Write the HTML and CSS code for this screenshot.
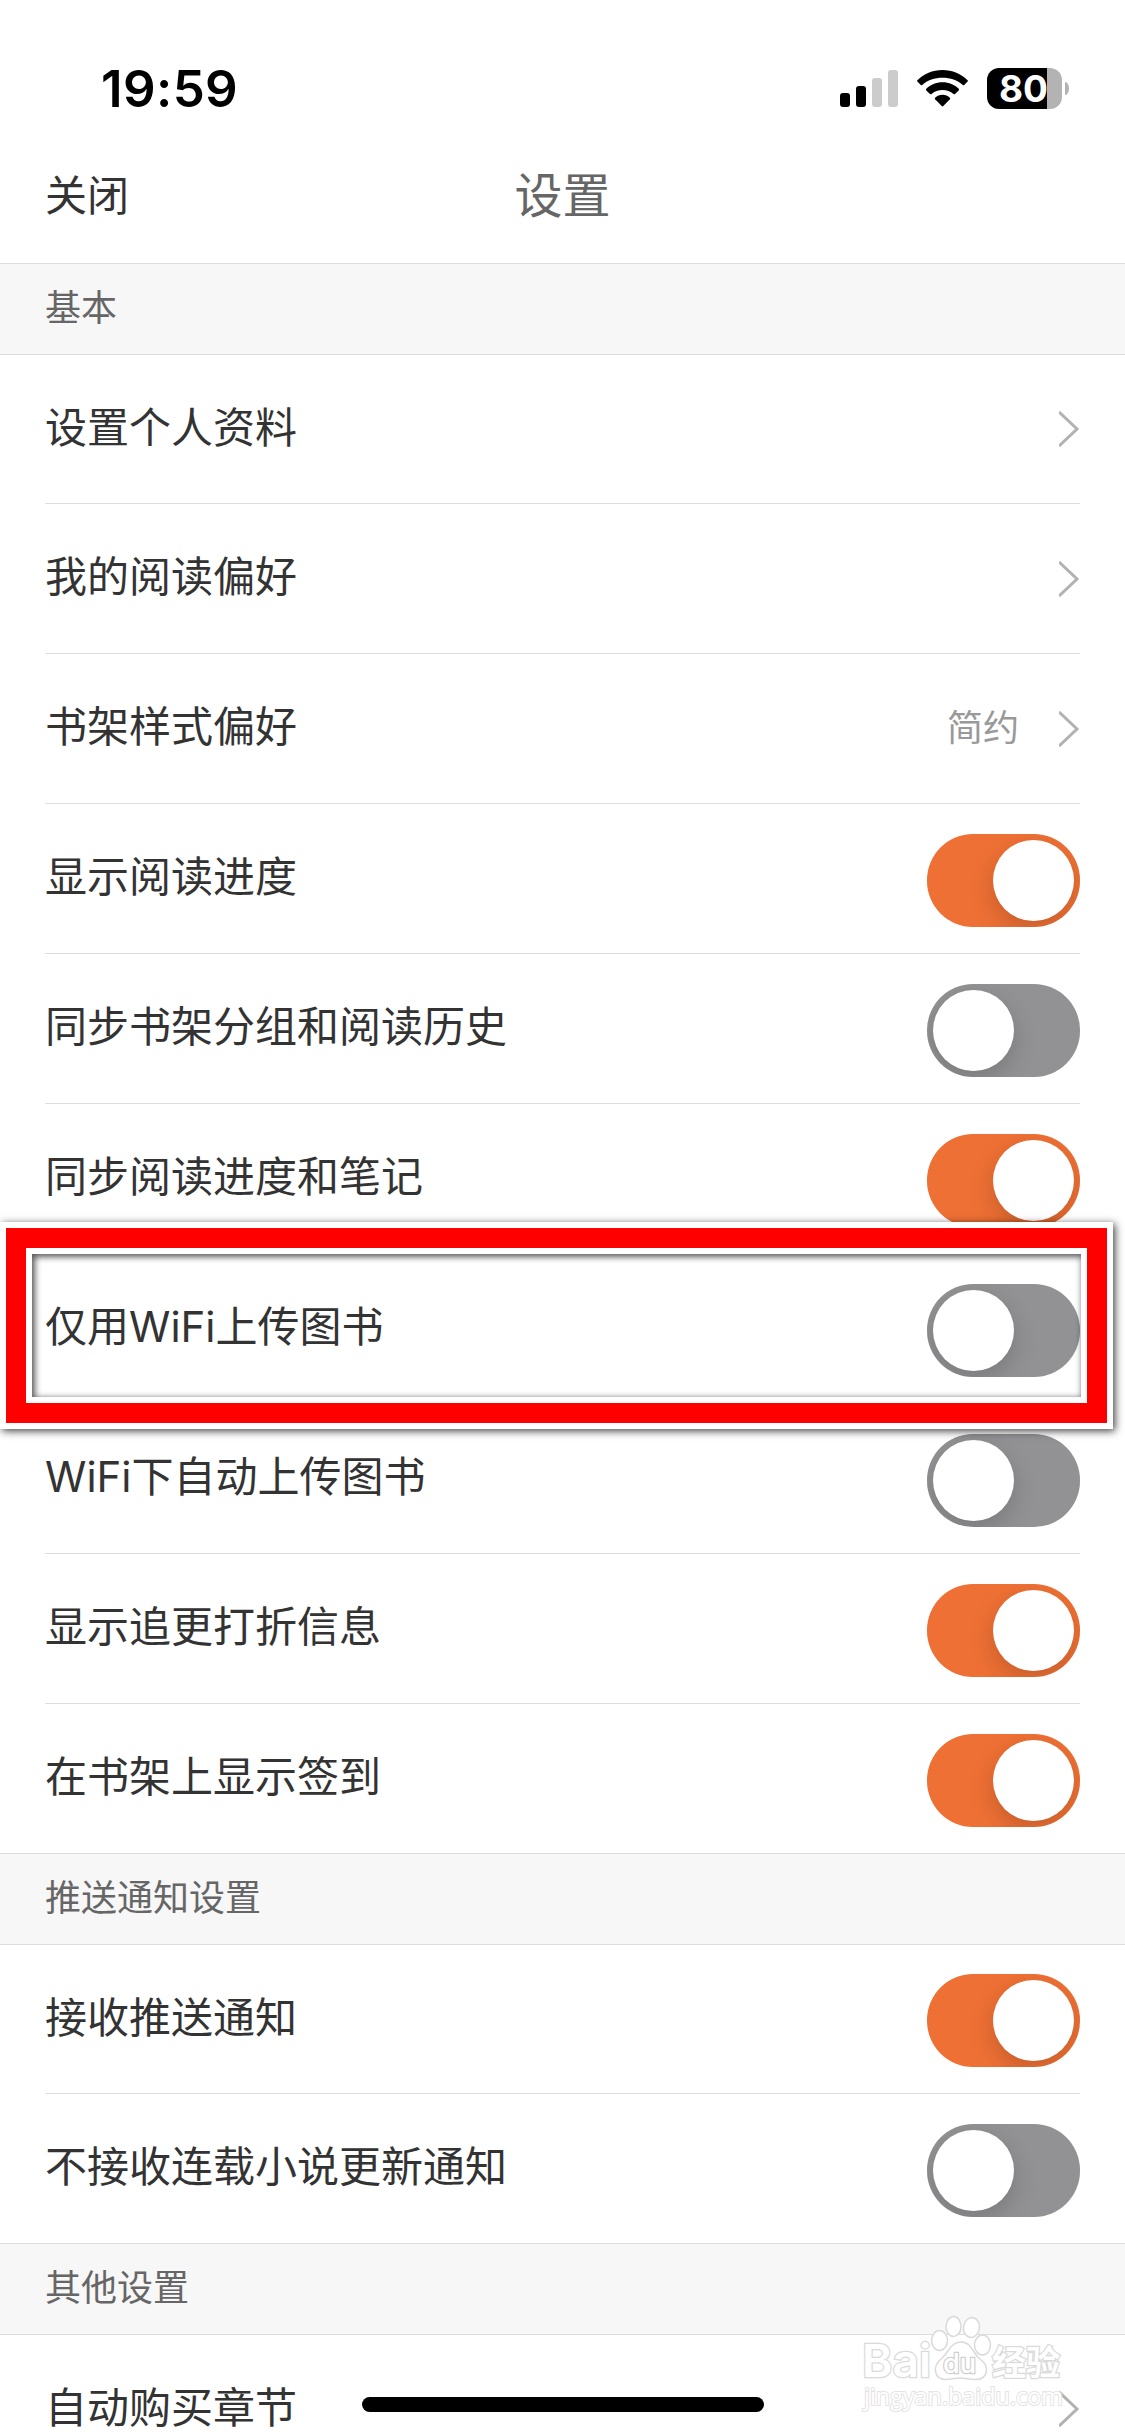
FILE: index.html
```html
<!DOCTYPE html>
<html lang="zh-CN">
<head>
    <meta charset="UTF-8">
    <meta name="viewport" content="width=device-width, initial-scale=1.0">
    <title>设置</title>
    <link rel="stylesheet" href="styles.css">
</head>
<body>
    <div class="status-bar">
        <div class="time">19:59</div>
        <div class="status-icons">
            <svg class="signal" width="58" height="37" viewBox="0 0 58 37">
                <rect x="0" y="23" width="10" height="14" rx="3"/>
                <rect x="16" y="16" width="10" height="21" rx="3"/>
                <rect class="weak" x="32" y="8" width="10" height="29" rx="3"/>
                <rect class="weak" x="48" y="0" width="10" height="37" rx="3"/>
            </svg>
            <svg class="wifi" width="51" height="37" viewBox="0 0 51 37">
                <path d="M25.5 0C35.4 0 44.3 3.9 50.6 10.2Q51.2 10.9 50.6 11.6L47.2 15Q46.5 15.6 45.8 15C40.4 10 33.3 7.7 25.5 7.7S10.6 10 5.2 15Q4.5 15.6 3.8 15L0.4 11.6Q-0.2 10.9 0.4 10.2C6.7 3.9 15.6 0 25.5 0Z"/>
                <path d="M25.5 12.3C31.9 12.3 37.6 14.8 41.7 18.8Q42.5 19.6 41.7 20.4L38 24Q37.3 24.7 36.5 24C33.5 21.4 29.7 20 25.5 20S17.5 21.4 14.5 24Q13.7 24.7 13 24L9.3 20.4Q8.5 19.6 9.3 18.8C13.4 14.8 19.1 12.3 25.5 12.3Z"/>
                <path d="M25.5 24.8C28.4 24.8 31 25.9 32.9 27.7Q33.6 28.4 32.9 29.2L26.3 36Q25.5 36.8 24.7 36L18.1 29.2Q17.4 28.4 18.1 27.7C20 25.9 22.6 24.8 25.5 24.8Z"/>
            </svg>
            <div class="battery">
                <div class="battery-body">80</div>
                <div class="battery-tip"></div>
            </div>
        </div>
    </div>

    <div class="nav-bar">
        <div class="nav-close">关闭</div>
        <div class="nav-title">设置</div>
    </div>

    <h2 class="section-title">基本</h2>
    <div class="list">
        <div class="row">
            <span class="label">设置个人资料</span>
            <svg class="arrow" width="21" height="36" viewBox="0 0 21 36"><path d="M0 1L18 18L0 35"/></svg>
        </div>
        <div class="row">
            <span class="label">我的阅读偏好</span>
            <svg class="arrow" width="21" height="36" viewBox="0 0 21 36"><path d="M0 1L18 18L0 35"/></svg>
        </div>
        <div class="row">
            <span class="label">书架样式偏好</span>
            <span class="value">简约</span>
            <svg class="arrow" width="21" height="36" viewBox="0 0 21 36"><path d="M0 1L18 18L0 35"/></svg>
        </div>
        <div class="row">
            <span class="label">显示阅读进度</span>
            <div class="switch on"></div>
        </div>
        <div class="row">
            <span class="label">同步书架分组和阅读历史</span>
            <div class="switch"></div>
        </div>
        <div class="row">
            <span class="label">同步阅读进度和笔记</span>
            <div class="switch on"></div>
        </div>
        <div class="row">
            <span class="label">仅用WiFi上传图书</span>
            <div class="switch"></div>
            <div class="highlight"></div>
        </div>
        <div class="row">
            <span class="label">WiFi下自动上传图书</span>
            <div class="switch"></div>
        </div>
        <div class="row">
            <span class="label">显示追更打折信息</span>
            <div class="switch on"></div>
        </div>
        <div class="row">
            <span class="label">在书架上显示签到</span>
            <div class="switch on"></div>
        </div>
    </div>

    <h2 class="section-title">推送通知设置</h2>
    <div class="list">
        <div class="row">
            <span class="label">接收推送通知</span>
            <div class="switch on"></div>
        </div>
        <div class="row">
            <span class="label">不接收连载小说更新通知</span>
            <div class="switch"></div>
        </div>
    </div>

    <h2 class="section-title">其他设置</h2>
    <div class="list">
        <div class="row">
            <span class="label">自动购买章节</span>
            <svg class="arrow" width="21" height="36" viewBox="0 0 21 36"><path d="M0 1L18 18L0 35"/></svg>
        </div>
    </div>

    <div class="home-indicator"></div>

    <svg class="watermark" width="220" height="115" viewBox="0 0 220 115">
        <g class="paw">
            <ellipse cx="84.5" cy="35.5" rx="8" ry="10"/>
            <ellipse cx="98.5" cy="21.500" rx="7.5" ry="10"/>
            <ellipse cx="116.500" cy="22.500" rx="8" ry="10" transform="rotate(10 116.500 22.500)"/>
            <ellipse cx="127.500" cy="40" rx="8" ry="10"/>
            <path d="M106 37C117 37 118 49 125 54C136 62 132 75 120 74.500C113 74.500 111 73 105 73C99 73 96 74.500 91 74.500C79 74.500 77 62 86 54C94 48 95 37 106 37Z"/>
        </g>
        <text class="brand" x="7" y="72" textLength="69" lengthAdjust="spacingAndGlyphs">Bai</text>
        <text class="brand-du" x="88" y="68" textLength="33" lengthAdjust="spacingAndGlyphs">du</text>
        <text class="brand-cn" x="137" y="70">经验</text>
        <text class="url" x="9" y="100" textLength="199" lengthAdjust="spacingAndGlyphs">jingyan.baidu.com</text>
    </svg>
</body>
</html>
```
FILE: styles.css
```css
* {
    box-sizing: border-box;
}

body {
    margin: 0;
    width: 1125px;
    height: 2436px;
    overflow: hidden;
    position: relative;
    background-color: #fff;
    color: #333;
    font-family: Inter, "Noto Sans CJK SC", sans-serif;
    font-weight: 400;
}

/* status bar */
.status-bar {
    display: flex;
    justify-content: space-between;
    align-items: center;
    height: 132px;
    padding: 45px 56px 0 101px;
    color: #000;
}

.time {
    font-size: 51px;
    font-weight: 600;
    line-height: 60px;
    letter-spacing: 0.4px;
}

.status-icons {
    display: flex;
    align-items: center;
}

.signal .weak {
    fill: #ccc;
}

.wifi {
    margin: 0 19px;
}

.battery {
    display: flex;
    align-items: center;
    gap: 3px;
}

.battery-body {
    width: 75px;
    height: 41px;
    padding-left: 12px;
    border-radius: 12px;
    background: linear-gradient(to right, #000 60px, #b3b3b3 60px);
    color: #fff;
    font-size: 37px;
    font-weight: 700;
    line-height: 41px;
}

.battery-tip {
    width: 4px;
    height: 13px;
    border-radius: 0 4px 4px 0 / 0 7px 7px 0;
    background-color: #b3b3b3;
}

/* nav bar */
.nav-bar {
    display: grid;
    grid-template-columns: 1fr auto 1fr;
    align-items: center;
    height: 131px;
    padding: 0 45px;
}

.nav-close {
    font-size: 42px;
    line-height: 60px;
    margin-bottom: 4px;
}

.nav-title {
    color: #666;
    font-size: 48px;
    line-height: 60px;
    margin-bottom: 4px;
}

/* settings */
.section-title {
    display: flex;
    align-items: center;
    margin: 0;
    height: 92px;
    padding: 0 45px 2px;
    border-top: 1px solid #dedede;
    border-bottom: 1px solid #dedede;
    background-color: #f7f7f7;
    color: #666;
    font-size: 36px;
    font-weight: 400;
    line-height: 50px;
}

.list {
    padding: 0 45px;
}

.row {
    display: flex;
    align-items: center;
    position: relative;
    height: 150px;
    padding-top: 3px;
    border-top: 1px solid #dedede;
}

.row:first-child {
    height: 148px;
    border-top: 0;
}

.label {
    flex: 1;
    font-size: 42px;
    line-height: 60px;
    margin-bottom: 6px;
}

.value {
    margin-right: 40px;
    color: #999;
    font-size: 36px;
    line-height: 50px;
    margin-bottom: 4px;
}

.arrow {
    margin-bottom: 3px;
    fill: none;
    stroke: #b2b2b2;
    stroke-width: 3;
}

.switch {
    width: 153px;
    height: 93px;
    padding: 6px;
    border-radius: 46px;
    background-color: #929294;
    overflow: hidden;
}

.switch::before {
    content: '';
    display: block;
    width: 81px;
    height: 81px;
    border-radius: 50%;
    background-color: #fff;
    box-shadow: 0 9px 24px rgba(0,0,0,0.17);
}

.switch.on {
    background-color: #ee7034;
}

.switch.on::before {
    margin-left: auto;
}

/* red frame around the WiFi row */
.highlight {
    position: absolute;
    left: -39px;
    top: -26px;
    width: 1101px;
    height: 195px;
    border: 20px solid #f00;
    box-shadow: 0 0 0 6px #fff, 2px 2px 8px 6px rgba(0,0,0,0.75), inset 0 0 0 6px #fff, inset 2px 2px 6px 7px rgba(0,0,0,0.65);
    z-index: 1;
}

.home-indicator {
    position: absolute;
    left: 362px;
    top: 2397px;
    width: 402px;
    height: 15px;
    border-radius: 8px;
    background-color: #000;
}

/* watermark */
.watermark {
    position: absolute;
    left: 855px;
    top: 2305px;
    fill: #fff;
    stroke: #dadada;
    stroke-width: 1.5;
}

.watermark text {
    paint-order: stroke;
    stroke-width: 2.5;
}

.brand {
    font-size: 45px;
    font-weight: 600;
}

.watermark .brand-du {
    font-size: 27px;
    font-weight: 500;
    stroke: #d0d0d0;
}

.brand-cn {
    font-size: 34px;
    font-weight: 700;
}

.watermark .url {
    font-family: "Open Sans", sans-serif;
    font-size: 23px;
    stroke: #e4e4e4;
    stroke-width: 2;
}
```
